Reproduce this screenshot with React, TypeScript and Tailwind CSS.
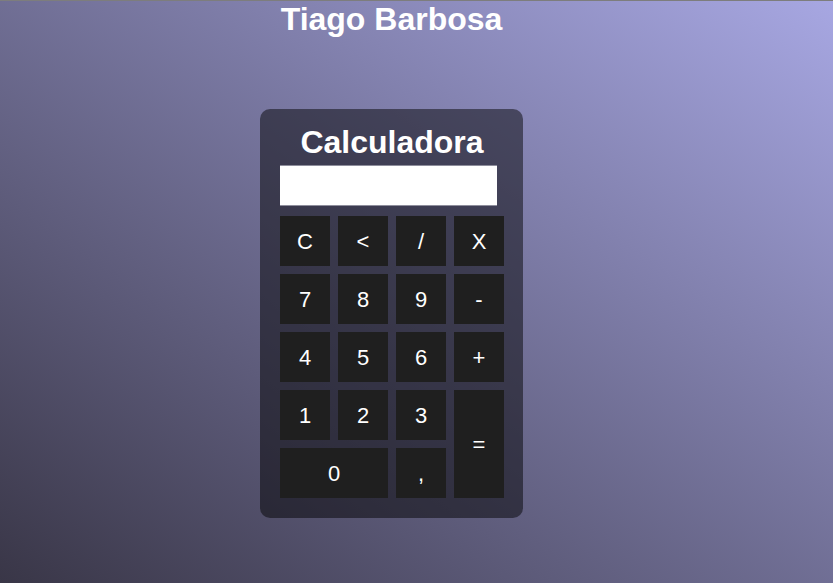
const keys: { label: string; cls?: string }[] = [
  { label: 'C' },
  { label: '<' },
  { label: '/' },
  { label: 'X' },
  { label: '7' },
  { label: '8' },
  { label: '9' },
  { label: '-' },
  { label: '4' },
  { label: '5' },
  { label: '6' },
  { label: '+' },
  { label: '1' },
  { label: '2' },
  { label: '3' },
  { label: '=', cls: 'row-span-2' },
  { label: '0', cls: 'col-span-2' },
  { label: ',' },
]

export default function App() {
  return (
    <div className="h-[583px] w-full overflow-hidden border-t border-[#7d7d7d] bg-[linear-gradient(to_top_right,#393647,#a7a7e2)] font-['Liberation_Sans',Arial,sans-serif] text-white">
      <div className="flex w-[783px] flex-col items-center">
        <h1 className="m-0 text-[32px] font-bold leading-[36px]">Tiago Barbosa</h1>

        <div className="mt-[72px] flex w-[263px] flex-col rounded-[10px] bg-black/[0.48] pb-[20px] pl-[20px] pr-[19px] pt-[15px]">
          <h2 className="mb-[4px] text-center text-[32px] font-bold leading-[37px]">Calculadora</h2>
          <div className="h-[41px] w-[217px] border-y border-[#8e8e9c] bg-white" />

          <div className="mt-[10px] grid grid-cols-[repeat(4,50px)] grid-rows-[repeat(5,50px)] gap-[8px]">
            {keys.map((k) => (
              <button
                key={k.label}
                className={`flex items-center justify-center bg-[#1f1f1f] text-[22px] text-white ${k.cls ?? ''}`}
              >
                {k.label}
              </button>
            ))}
          </div>
        </div>
      </div>
    </div>
  )
}
